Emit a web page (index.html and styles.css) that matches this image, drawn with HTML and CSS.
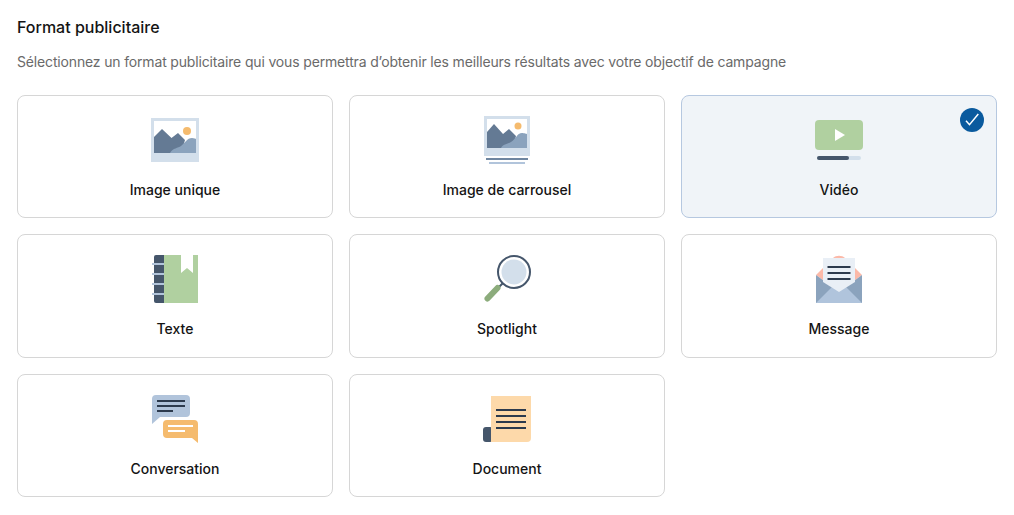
FILE: index.html
```html
<!DOCTYPE html>
<html lang="fr">
<head>
<meta charset="utf-8">
<title>Format publicitaire</title>
<link rel="stylesheet" href="styles.css">
</head>
<body>
<main class="page">
  <h1 class="title">Format publicitaire</h1>
  <p class="subtitle">Sélectionnez un format publicitaire qui vous permettra d’obtenir les meilleurs résultats avec votre objectif de campagne</p>
  <div class="grid">
    <div class="card">
      <svg class="icon" viewBox="0 0 48 48">
        <rect y="2" width="48" height="44" fill="#d3dfeb"/>
        <rect x="3" y="5" width="42" height="32" fill="#fff"/>
        <path d="M3 21L11 13L20.5 22L27 17L34 24L30 37H3Z" fill="#647a94"/>
        <path d="M19 37C22 32 27 32 30 30C34 27 36 22 41 22C43 22 45 23 45 23V37Z" fill="#8ba3bd"/>
        <circle cx="36" cy="15" r="4" fill="#f5bb6e"/>
      </svg>
      <span class="label">Image unique</span>
    </div>
    <div class="card">
      <svg class="icon" viewBox="0 0 48 48">
        <rect x="1" width="46" height="40" fill="#d3dfeb"/>
        <rect x="4" y="3" width="40" height="29" fill="#fff"/>
        <path d="M4 16L11 8L20 18L26 13L33 20L30 32H4Z" fill="#647a94"/>
        <path d="M18 32C20 28 25 28 28 26C33 23 34 17 39 17C41 17 44 18 44 18V32Z" fill="#8ba3bd"/>
        <circle cx="35" cy="10" r="3.5" fill="#f5bb6e"/>
        <rect x="3" y="42" width="42" height="2" fill="#6f86a0"/>
        <rect x="6" y="46" width="36" height="2" fill="#b1c4db"/>
      </svg>
      <span class="label">Image de carrousel</span>
    </div>
    <div class="card card-selected">
      <svg class="icon" viewBox="0 0 48 48">
        <rect y="4" width="48" height="30" rx="4" fill="#b0d0a0"/>
        <path d="M20 13L30 19L20 25Z" fill="#fff"/>
        <rect x="2" y="40" width="44" height="4" rx="2" fill="#d3dfeb"/>
        <rect x="2" y="40" width="32" height="4" rx="2" fill="#45566b"/>
      </svg>
      <span class="label">Vidéo</span>
      <svg class="check" viewBox="0 0 24 24">
        <circle cx="12" cy="12" r="12" fill="#0a5a9e"/>
        <path d="M6 12.700L9.500 16.700L18.300 6" fill="none" stroke="#fff" stroke-width="1.500"/>
      </svg>
    </div>
    <div class="card">
      <svg class="icon" viewBox="0 0 48 48">
        <path d="M13 0H47V48H13Z" fill="#b0d0a0"/>
        <path d="M5 0H13V48H5A2 2 0 0 1 3 46V2A2 2 0 0 1 5 0Z" fill="#45566b"/>
        <path d="M30 0H42V18L36 13L30 18Z" fill="#fff"/>
        <rect x="1" y="8" width="12" height="2" fill="#b1c4db"/>
        <rect x="1" y="18" width="12" height="2" fill="#b1c4db"/>
        <rect x="1" y="28" width="12" height="2" fill="#b1c4db"/>
        <rect x="1" y="38" width="12" height="2" fill="#b1c4db"/>
      </svg>
      <span class="label">Texte</span>
    </div>
    <div class="card">
      <svg class="icon" viewBox="0 0 48 48">
        <circle cx="31" cy="17" r="12.5" fill="#d3dfeb"/>
        <circle cx="31" cy="17" r="16" fill="none" stroke="#45566b" stroke-width="2"/>
        <path d="M19.5 28.5L15 33" stroke="#45566b" stroke-width="2"/>
        <path d="M14.5 33L4.500 43.500" stroke="#8cac7c" stroke-width="6" stroke-linecap="round"/>
      </svg>
      <span class="label">Spotlight</span>
    </div>
    <div class="card">
      <svg class="icon" viewBox="0 0 48 48">
        <path d="M1 20L18 3C21 0 27 0 30 3L47 20L24 37Z" fill="#fcb9a8"/>
        <path d="M1 20L24 37L47 20V48H1Z" fill="#8ba3bd"/>
        <path d="M1 48L24 25L47 48Z" fill="#b0c4dc"/>
        <path d="M8 3H40V27L24 37L8 27Z" fill="#e9eff6"/>
        <rect x="12.500" y="11" width="23" height="2" fill="#2c3a4d"/>
        <rect x="12.500" y="17" width="23" height="2" fill="#2c3a4d"/>
        <rect x="12.500" y="23" width="23" height="2" fill="#2c3a4d"/>
      </svg>
      <span class="label">Message</span>
    </div>
    <div class="card">
      <svg class="icon" viewBox="0 0 48 48">
        <path d="M5 0H35A4 4 0 0 1 39 4V18A4 4 0 0 1 35 22H9L1 29V4A4 4 0 0 1 5 0Z" fill="#b1c4db"/>
        <rect x="6" y="5" width="28" height="2" fill="#2c3a4d"/>
        <rect x="6" y="10" width="28" height="2" fill="#2c3a4d"/>
        <rect x="6" y="15" width="16" height="2" fill="#2c3a4d"/>
        <path d="M16 25H43A4 4 0 0 1 47 29V48L41 43H16A4 4 0 0 1 12 39V29A4 4 0 0 1 16 25Z" fill="#f5bb6e"/>
        <rect x="17" y="30" width="25" height="2" fill="#fff"/>
        <rect x="17" y="35" width="17" height="2" fill="#fff"/>
      </svg>
      <span class="label">Conversation</span>
    </div>
    <div class="card">
      <svg class="icon" viewBox="0 0 48 48">
        <rect y="32" width="10" height="15" rx="3" fill="#45566b"/>
        <path d="M8 1H48V43A4 4 0 0 1 44 47H8Z" fill="#fdd9aa"/>
        <rect x="13" y="14" width="30" height="2" fill="#2c3a4d"/>
        <rect x="13" y="20" width="30" height="2" fill="#2c3a4d"/>
        <rect x="13" y="26" width="30" height="2" fill="#2c3a4d"/>
        <rect x="13" y="32" width="30" height="2" fill="#2c3a4d"/>
      </svg>
      <span class="label">Document</span>
    </div>
  </div>
</main>
</body>
</html>
```
FILE: styles.css
```css
* { box-sizing: border-box; }
html, body { margin: 0; padding: 0; background: #fff; }
body { font-family: Inter, "Liberation Sans", sans-serif; }
.page { padding: 17px 17px 0; }
.title {
  margin: 0;
  font-size: 16px;
  line-height: 20px;
  font-weight: 500;
  color: #141414;
}
.subtitle {
  margin: 15px 0 0;
  font-size: 14px;
  line-height: 20px;
  font-weight: 400;
  letter-spacing: -0.16px;
  color: #6a6a6a;
}
.grid {
  margin-top: 23px;
  display: grid;
  grid-template-columns: repeat(3, 316px);
  grid-auto-rows: 123.25px;
  gap: 16px;
}
.card {
  position: relative;
  display: flex;
  flex-direction: column;
  align-items: center;
  padding-top: 20px;
  border: 1px solid #d6d6d6;
  border-radius: 8px;
  background: #fff;
}
.card-selected {
  background: #f0f4f8;
  border-color: #b6c8e0;
}
.icon { display: block; width: 48px; height: 48px; flex: none; }
.label {
  margin-top: 16px;
  font-size: 14px;
  line-height: 20px;
  font-weight: 500;
  color: #141414;
}
.check {
  position: absolute;
  top: 12px;
  right: 12px;
  width: 24px;
  height: 24px;
}
```
